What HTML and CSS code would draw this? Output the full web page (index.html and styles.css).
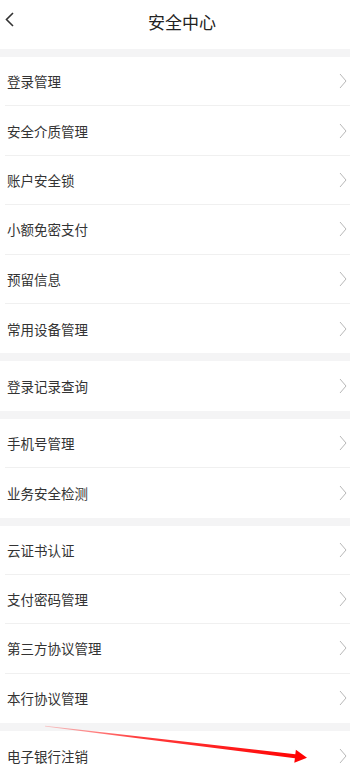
FILE: index.html
```html
<!DOCTYPE html>
<html lang="zh-CN">
<head>
<meta charset="utf-8">
<title>安全中心</title>
<link rel="stylesheet" href="styles.css">
</head>
<body>
<div class="page">
  <header class="header">
    <div class="back">
      <svg width="10" height="15" viewBox="0 0 10 15"><polyline points="8,1 1.5,7.5 8,14" fill="none" stroke="#333" stroke-width="1.6"/></svg>
    </div>
    <div class="title">安全中心</div>
    <div></div>
  </header>

  <div class="gap"></div>
  <div class="group">
    <div class="row"><span>登录管理</span><svg class="chev" width="8" height="16" viewBox="0 0 8 16"><polyline points="1,1 7,8 1,15"/></svg></div>
    <div class="row"><span>安全介质管理</span><svg class="chev" width="8" height="16" viewBox="0 0 8 16"><polyline points="1,1 7,8 1,15"/></svg></div>
    <div class="row"><span>账户安全锁</span><svg class="chev" width="8" height="16" viewBox="0 0 8 16"><polyline points="1,1 7,8 1,15"/></svg></div>
    <div class="row"><span>小额免密支付</span><svg class="chev" width="8" height="16" viewBox="0 0 8 16"><polyline points="1,1 7,8 1,15"/></svg></div>
    <div class="row"><span>预留信息</span><svg class="chev" width="8" height="16" viewBox="0 0 8 16"><polyline points="1,1 7,8 1,15"/></svg></div>
    <div class="row"><span>常用设备管理</span><svg class="chev" width="8" height="16" viewBox="0 0 8 16"><polyline points="1,1 7,8 1,15"/></svg></div>
  </div>

  <div class="gap"></div>
  <div class="group">
    <div class="row"><span>登录记录查询</span><svg class="chev" width="8" height="16" viewBox="0 0 8 16"><polyline points="1,1 7,8 1,15"/></svg></div>
  </div>

  <div class="gap"></div>
  <div class="group">
    <div class="row"><span>手机号管理</span><svg class="chev" width="8" height="16" viewBox="0 0 8 16"><polyline points="1,1 7,8 1,15"/></svg></div>
    <div class="row"><span>业务安全检测</span><svg class="chev" width="8" height="16" viewBox="0 0 8 16"><polyline points="1,1 7,8 1,15"/></svg></div>
  </div>

  <div class="gap"></div>
  <div class="group">
    <div class="row"><span>云证书认证</span><svg class="chev" width="8" height="16" viewBox="0 0 8 16"><polyline points="1,1 7,8 1,15"/></svg></div>
    <div class="row"><span>支付密码管理</span><svg class="chev" width="8" height="16" viewBox="0 0 8 16"><polyline points="1,1 7,8 1,15"/></svg></div>
    <div class="row"><span>第三方协议管理</span><svg class="chev" width="8" height="16" viewBox="0 0 8 16"><polyline points="1,1 7,8 1,15"/></svg></div>
    <div class="row"><span>本行协议管理</span><svg class="chev" width="8" height="16" viewBox="0 0 8 16"><polyline points="1,1 7,8 1,15"/></svg></div>
  </div>

  <div class="gap"></div>
  <div class="group">
    <div class="row"><span>电子银行注销</span><svg class="chev" width="8" height="16" viewBox="0 0 8 16"><polyline points="1,1 7,8 1,15"/></svg></div>
  </div>

  <svg class="annot" width="350" height="773" viewBox="0 0 350 773">
    <defs>
      <linearGradient id="rg" x1="45" y1="726" x2="307" y2="758" gradientUnits="userSpaceOnUse">
        <stop offset="0" stop-color="#ff3030" stop-opacity="0.25"/>
        <stop offset="0.35" stop-color="#ff1a1a" stop-opacity="0.85"/>
        <stop offset="1" stop-color="#ff0000"/>
      </linearGradient>
    </defs>
    <polygon points="45,725.7 295.3,754.2 295.9,749.8 307,757.7 294.3,762.8 294.9,758.3 45,726.4" fill="url(#rg)"/>
  </svg>
</div>
</body>
</html>
```

FILE: styles.css
```css
html, body {
  margin: 0;
  padding: 0;
  background: #ffffff;
}

.page {
  position: relative;
  width: 350px;
  height: 773px;
  overflow: hidden;
  font-family: "Noto Sans CJK SC", "Noto Sans", sans-serif;
  color: #333333;
  background: #ffffff;
}

.header {
  box-sizing: border-box;
  height: 49px;
  padding-top: 10px;
  display: grid;
  grid-template-columns: 44px 1fr 30px;
  align-items: start;
}

.back {
  padding-left: 5px;
  margin-top: 2px;
  height: 15px;
}

.back svg {
  display: block;
}

.title {
  font-size: 17px;
  line-height: 24px;
  text-align: center;
  color: #222222;
}

.gap {
  height: 8px;
  background: #f4f4f5;
}

.group {
  margin-left: 5px;
}

.row {
  box-sizing: border-box;
  height: 49.4px;
  padding-left: 2px;
  padding-right: 3px;
  display: flex;
  align-items: center;
  justify-content: space-between;
  border-bottom: 1px solid #f0f0f0;
  font-size: 13.5px;
}

.row:last-child {
  border-bottom: none;
}

.chev {
  display: block;
}

.chev polyline {
  fill: none;
  stroke: #b8b8b8;
  stroke-width: 1;
}

.annot {
  position: absolute;
  left: 0;
  top: 0;
  pointer-events: none;
}
```
